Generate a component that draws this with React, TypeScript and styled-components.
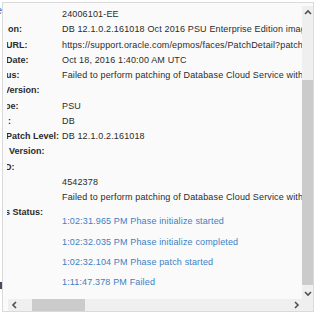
import React from "react";
import styled, { createGlobalStyle } from "styled-components";

type DetailRow = {
  label: string;
  shift?: number;
  value?: string;
};

const rows: DetailRow[] = [
  { label: "", value: "24006101-EE" },
  { label: "on:", shift: 1, value: "DB 12.1.0.2.161018 Oct 2016 PSU Enterprise Edition image for Database Cloud Service" },
  { label: "URL:", shift: -1, value: "https://support.oracle.com/epmos/faces/PatchDetail?patchId=24006101" },
  { label: "Date:", shift: -1, value: "Oct 18, 2016 1:40:00 AM UTC" },
  { label: "us:", shift: -1, value: "Failed to perform patching of Database Cloud Service with patch 24006101-EE" },
  { label: "Version:", shift: -3 },
  { label: "pe:", shift: -2, value: "PSU" },
  { label: ":", shift: 1, value: "DB" },
  { label: "Patch Level:", shift: -1, value: "DB 12.1.0.2.161018" },
  { label: "Version:", shift: 2 },
  { label: "D:", shift: -2 },
  { label: "", value: "4542378" },
  { label: "", value: "Failed to perform patching of Database Cloud Service with patch 24006101-EE" },
];

const statusLog = [
  "1:02:31.965 PM Phase initialize started",
  "1:02:32.035 PM Phase initialize completed",
  "1:02:32.104 PM Phase patch started",
  "1:11:47.378 PM Failed",
];

const GlobalStyle = createGlobalStyle`
  html, body {
    margin: 0;
    padding: 0;
    background: #ffffff;
  }
  body {
    font-family: "Liberation Sans", Arial, sans-serif;
  }
`;

const Chevron: React.FC<{ dir: "up" | "down" | "left" | "right" }> = ({ dir }) => {
  const points = {
    up: "1,5 4,2 7,5",
    down: "1,2 4,5 7,2",
    left: "5,1 2,4 5,7",
    right: "2,1 5,4 2,7",
  }[dir];
  const vertical = dir === "up" || dir === "down";
  return (
    <svg width={vertical ? 8 : 7} height={vertical ? 7 : 8} viewBox={vertical ? "0 0 8 7" : "0 0 7 8"}>
      <polyline points={points} fill="none" stroke="#505050" strokeWidth="1.6" />
    </svg>
  );
};

const App: React.FC = () => {
  return (
    <>
      <GlobalStyle />
      <Page>
        <BackStrip>
          <BackLink>e</BackLink>
          <BackBar />
        </BackStrip>
        <Panel>
          <ContentBox>
            <DetailTable>
              {rows.map((row, i) => (
                <Row key={i}>
                  <LabelCell>
                    <Label shift={row.shift ?? 0}>{row.label}</Label>
                  </LabelCell>
                  <Value>{row.value}</Value>
                </Row>
              ))}
              <Row>
                <LabelCell>
                  <Label shift={-2}>s Status:</Label>
                </LabelCell>
                <StatusList>
                  {statusLog.map((entry) => (
                    <StatusEntry key={entry}>{entry}</StatusEntry>
                  ))}
                </StatusList>
              </Row>
            </DetailTable>
          </ContentBox>

          <VScroll>
            <ScrollButton>
              <Chevron dir="up" />
            </ScrollButton>
            <VTrack>
              <VThumb />
            </VTrack>
            <ScrollButton>
              <Chevron dir="down" />
            </ScrollButton>
          </VScroll>

          <HScroll>
            <HButton>
              <Chevron dir="left" />
            </HButton>
            <HTrack>
              <HThumb />
            </HTrack>
            <HButton>
              <Chevron dir="right" />
            </HButton>
          </HScroll>
          <Corner />
        </Panel>
      </Page>
    </>
  );
};

const Page = styled.div`
  width: 320px;
  height: 316px;
  display: flex;
  align-items: flex-start;
  overflow: hidden;
  background: #ffffff;
`;

const BackStrip = styled.div`
  width: 2px;
  height: 316px;
  flex-shrink: 0;
  overflow: hidden;
  display: flex;
  flex-direction: column;
  align-items: flex-end;
`;

const BackLink = styled.span`
  margin-top: 3px;
  font-size: 11px;
  line-height: 14px;
  color: #2f6fba;
`;

const BackBar = styled.div`
  margin-top: 265px;
  width: 2px;
  height: 7px;
  background: #4b4a5c;
`;

const Panel = styled.div`
  margin-top: 2px;
  width: 312px;
  height: 310px;
  box-sizing: border-box;
  border: 1px solid #dadada;
  background: #fafafa;
  display: grid;
  grid-template-columns: 1fr 11px;
  grid-template-rows: 1fr 12px;
`;

const ContentBox = styled.div`
  padding: 4px 0 0 4px;
  background: #fafafa;
  border-bottom-right-radius: 3px;
  overflow: hidden;
`;

const DetailTable = styled.div`
  display: flex;
  flex-direction: column;
  font-size: 9px;
  letter-spacing: 0.15px;
  color: #2b2b2b;
`;

const Row = styled.div`
  display: flex;
  align-items: flex-start;
  min-height: 15.25px;
  line-height: 15.25px;
`;

const LabelCell = styled.div`
  width: 55px;
  flex-shrink: 0;
  overflow: hidden;
  white-space: nowrap;
`;

const Label = styled.span<{ shift: number }>`
  display: inline-block;
  margin-left: ${({ shift }) => shift}px;
  font-weight: bold;
  letter-spacing: 0;
  color: #2b2b2b;
`;

const Value = styled.span`
  white-space: nowrap;
`;

const StatusList = styled.div`
  display: flex;
  flex-direction: column;
  padding-top: 6px;
`;

const StatusEntry = styled.span`
  line-height: 20.3px;
  white-space: nowrap;
  color: #3d7fc4;
`;

const VScroll = styled.div`
  display: flex;
  flex-direction: column;
  padding-top: 3px;
  background: #fafafa;
`;

const ScrollButton = styled.div`
  height: 12px;
  flex-shrink: 0;
  display: flex;
  align-items: center;
  justify-content: center;
  background: #efefef;
`;

const VTrack = styled.div`
  flex: 1;
  background: #efefef;
  display: flex;
  flex-direction: column;
`;

const VThumb = styled.div`
  margin-top: 62px;
  height: 205px;
  background: #cbcbcb;
`;

const HScroll = styled.div`
  margin-left: 5px;
  display: flex;
  background: #efefef;
`;

const HButton = styled.div`
  width: 12px;
  flex-shrink: 0;
  display: flex;
  align-items: center;
  justify-content: center;
`;

const HTrack = styled.div`
  flex: 1;
  display: flex;
`;

const HThumb = styled.div`
  margin-left: 12px;
  width: 53px;
  background: #cbcbcb;
`;

const Corner = styled.div`
  background: #efefef;
`;

export default App;
